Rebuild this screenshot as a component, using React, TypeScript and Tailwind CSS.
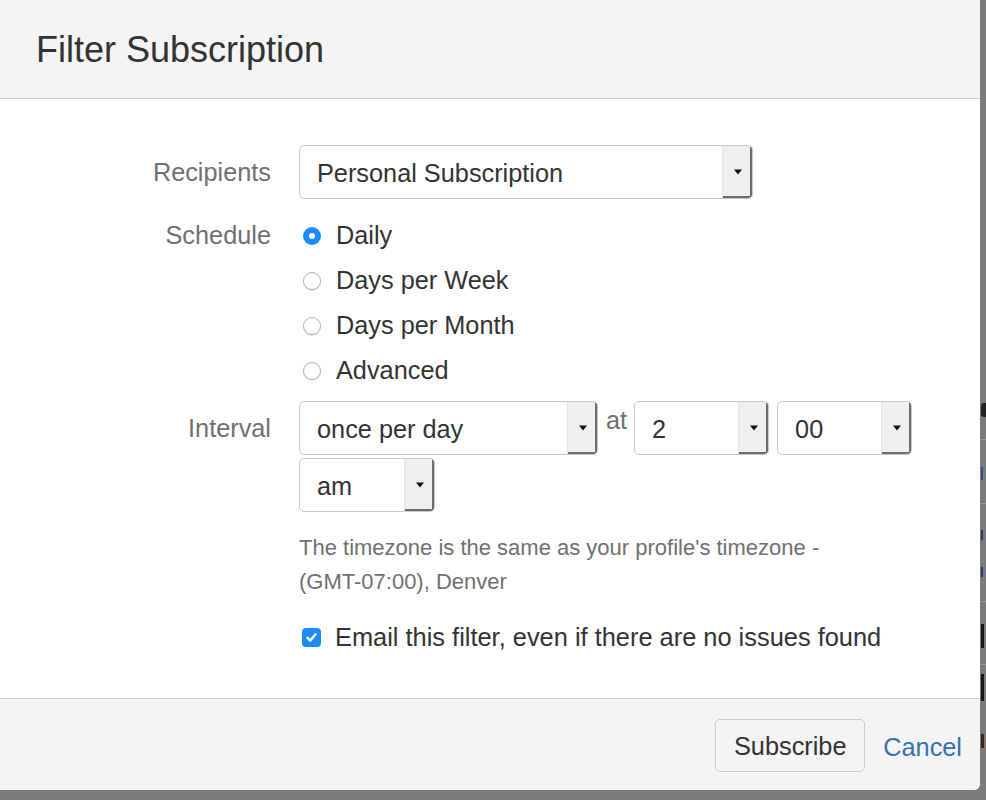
import React from "react";

function Arrow() {
  return (
    <svg width="10" height="6" viewBox="0 0 10 6" className="block">
      <path d="M1 0.5 L9 0.5 L5 5.5 Z" fill="#111" />
    </svg>
  );
}

function Select({ value, className }: { value: string; className: string }) {
  return (
    <div
      className={
        "flex h-[54px] shrink-0 overflow-hidden rounded-[5px] border border-[#c9c9c9] bg-white " +
        className
      }
    >
      <div className="flex flex-1 items-center pl-[17px] pt-[3px] text-[25.3px] text-[#333]">{value}</div>
      <div className="flex w-[30px] items-center justify-center border-l border-[#e2e2e2] bg-[#efefef] shadow-[inset_-2px_-2px_0_#6c6c6c]">
        <Arrow />
      </div>
    </div>
  );
}

function Radio({ checked, label }: { checked?: boolean; label: string }) {
  return (
    <div className="flex h-[45px] items-center">
      {checked ? (
        <div className="ml-[4px] flex h-[18px] w-[18px] items-center justify-center rounded-full bg-[#1a8cff]">
          <div className="h-[6px] w-[6px] rounded-full bg-white" />
        </div>
      ) : (
        <div className="ml-[4px] h-[18px] w-[18px] rounded-full border border-[#b4b4b4] bg-white shadow-[0_1px_1px_rgba(0,0,0,0.12)]" />
      )}
      <span className="ml-[15px] text-[25.3px] text-[#333]">{label}</span>
    </div>
  );
}

export default function App() {
  return (
    <div
      className="flex h-[800px] w-[986px] flex-col overflow-hidden bg-[#7b7b7b]"
      style={{ fontFamily: '"Liberation Sans", Arial, Helvetica, sans-serif' }}
    >
      <div className="flex h-[790px]">
        <div className="flex h-[790px] w-[980px] flex-col overflow-hidden rounded-br-[6px] bg-white">
          {/* Header */}
          <div className="flex h-[99px] shrink-0 items-center border-b border-[#cccccc] bg-[#f4f4f4] pl-[36px] pt-[2px]">
            <h1 className="text-[36px] leading-[36px] text-[#333]">Filter Subscription</h1>
          </div>

          {/* Body */}
          <div className="flex-1 pt-[46px]">
            <div className="flex">
              <div className="w-[271px] text-right text-[25.3px] leading-[54px] text-[#707070]">Recipients</div>
              <div className="ml-[28px]">
                <Select value="Personal Subscription" className="w-[454px]" />
              </div>
            </div>

            <div className="mt-[14px] flex">
              <div className="w-[271px] text-right text-[25.3px] leading-[45px] text-[#707070]">Schedule</div>
              <div className="ml-[28px] flex flex-col">
                <Radio checked label="Daily" />
                <Radio label="Days per Week" />
                <Radio label="Days per Month" />
                <Radio label="Advanced" />
              </div>
            </div>

            <div className="mt-[8px] flex">
              <div className="w-[271px] text-right text-[25.3px] leading-[54px] text-[#707070]">Interval</div>
              <div className="ml-[28px] flex flex-col">
                <div className="flex items-start">
                  <Select value="once per day" className="w-[299px]" />
                  <span className="ml-[8px] mr-[7px] text-[25.3px] leading-[38px] text-[#707070]">at</span>
                  <Select value="2" className="w-[135px]" />
                  <Select value="00" className="ml-[8px] w-[135px]" />
                </div>
                <div className="mt-[3px] flex">
                  <Select value="am" className="w-[136px]" />
                </div>
                <div className="mt-[19px] text-[22px] leading-[34px] text-[#707070]">
                  The timezone is the same as your profile's timezone -
                  <br />
                  (GMT-07:00), Denver
                </div>
                <div className="mt-[20px] flex h-[36px] items-center">
                  <div className="ml-[3px] flex h-[19px] w-[19px] items-center justify-center rounded-[4px] bg-[#1a8cff]">
                    <svg width="13" height="13" viewBox="0 0 13 13">
                      <path
                        d="M2.5 6.8 L5.3 9.6 L10.5 3.2"
                        fill="none"
                        stroke="white"
                        strokeWidth="2.4"
                        strokeLinecap="round"
                        strokeLinejoin="round"
                      />
                    </svg>
                  </div>
                  <span className="ml-[14px] text-[25.4px] text-[#333]">
                    Email this filter, even if there are no issues found
                  </span>
                </div>
              </div>
            </div>
          </div>

          {/* Footer */}
          <div className="flex h-[92px] shrink-0 items-start justify-end border-t border-[#cccccc] bg-[#f4f4f4] pr-[18px] pt-[20px]">
            <button className="h-[53px] w-[150px] rounded-[5px] border border-[#cccccc] bg-[#f4f4f4] pt-[2px] text-[25.3px] text-[#333]">
              Subscribe
            </button>
            <a className="ml-[18px] pt-[2px] text-[25.3px] leading-[53px] text-[#3572b0]">Cancel</a>
          </div>
        </div>

        {/* Page behind the overlay (right strip) */}
        <div className="flex w-[6px] flex-col pl-[1px]">
          <div className="h-[403px]" />
          <div className="h-[14px] w-[5px] rounded-l-[3px] bg-[#222]" />
          <div className="mt-[22px] h-px w-full bg-[#9a9a9a]" />
          <div className="mt-[27px] h-[13px] w-[2px] bg-[#2a4f8a]" />
          <div className="mt-[23px] h-px w-full bg-[#9a9a9a]" />
          <div className="mt-[26px] h-[10px] w-[2px] bg-[#1f3f77]" />
          <div className="mt-[27px] h-[10px] w-[2px] bg-[#1f3f77]" />
          <div className="mt-[24px] h-px w-full bg-[#9a9a9a]" />
          <div className="mt-[22px] h-[24px] w-[3px] bg-[#1a1a1a]" />
          <div className="mt-[16px] h-px w-full bg-[#9a9a9a]" />
          <div className="mt-[9px] h-[27px] w-[3px] bg-[#1a1a1a]" />
          <div className="mt-[33px] h-[14px] w-[3px] bg-[#3a2a10]" />
        </div>
      </div>
    </div>
  );
}
